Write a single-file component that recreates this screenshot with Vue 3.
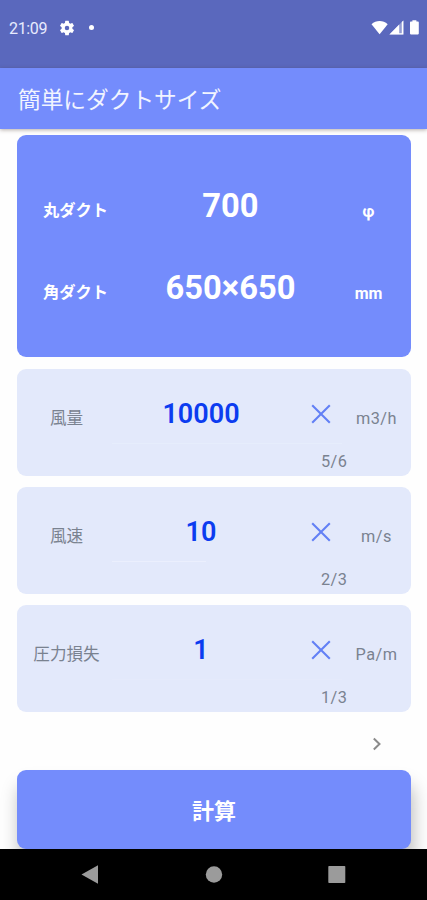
<script setup>
const results = [
  { label: '丸ダクト', value: '700', unit: 'φ' },
  { label: '角ダクト', value: '650×650', unit: 'mm' },
]
const fields = [
  { label: '風量', value: '10000', unit: 'm3/h', count: '5/6', line: 'line-full' },
  { label: '風速', value: '10', unit: 'm/s', count: '2/3', line: 'line-part' },
  { label: '圧力損失', value: '1', unit: 'Pa/m', count: '1/3', line: 'line-faint' },
]
</script>

<template>
  <div class="screen">
    <header class="status">
      <span class="time">21:09</span>
      <svg class="gear" width="18" height="18" viewBox="0 0 24 24">
        <path fill="#fff" fill-rule="evenodd" d="M19.14 12.94c.04-.3.06-.61.06-.94s-.02-.64-.07-.94l2.03-1.58a.49.49 0 0 0 .12-.61l-1.92-3.32a.49.49 0 0 0-.59-.22l-2.39.96a7 7 0 0 0-1.62-.94l-.36-2.54A.48.48 0 0 0 13.92 2.4h-3.84a.48.48 0 0 0-.47.41l-.36 2.54c-.59.24-1.13.57-1.62.94l-2.39-.96a.48.48 0 0 0-.59.22L2.74 8.87a.48.48 0 0 0 .12.61l2.03 1.58a6 6 0 0 0 0 1.88l-2.03 1.58a.49.49 0 0 0-.12.61l1.92 3.32c.12.22.37.29.59.22l2.39-.96c.5.38 1.03.7 1.62.94l.36 2.54c.05.24.24.41.48.41h3.84c.24 0 .44-.17.47-.41l.36-2.54a7 7 0 0 0 1.62-.94l2.39.96c.22.08.47 0 .59-.22l1.92-3.32a.48.48 0 0 0-.12-.61zM12 15a3 3 0 1 1 0-6 3 3 0 0 1 0 6z" />
      </svg>
      <span class="dot"></span>
      <svg class="signals" width="50" height="16" viewBox="0 0 50 16">
        <path fill="#fff" d="M.5 4.200C5-.2 12.200-.2 16.700 4.200L8.600 14.300z" />
        <path fill="#fff" fill-opacity=".35" d="M32.400.4V14.400H18.400z" />
        <path fill="#fff" d="M28.200 4.600V14.400H18.400zM30.800 2l1.600-1.600V14.400h-4.200v-1.200h2.600z" />
        <path fill="#fff" d="M39.800 1.600h1.600V.3h4v1.300h1.600q.8 0 .8.800v11.200q0 .8-.8.800h-7.200q-.8 0-.8-.8V2.400q0-.8.8-.8z" />
      </svg>
    </header>
    <div class="appbar">簡単にダクトサイズ</div>
    <main>
      <section class="result">
        <div v-for="r in results" :key="r.label" class="result-row">
          <span class="r-label">{{ r.label }}</span>
          <span class="r-value">{{ r.value }}</span>
          <span class="r-unit">{{ r.unit }}</span>
        </div>
      </section>
      <section v-for="f in fields" :key="f.label" class="field">
        <span class="f-label">{{ f.label }}</span>
        <span class="f-value">{{ f.value }}</span>
        <svg class="clear" width="20" height="20" viewBox="0 0 20 20">
          <path d="M1.200 1.200l17.600 17.600M18.800 1.200L1.200 18.800" stroke="#6380f5" stroke-width="2.100" fill="none" />
        </svg>
        <span class="f-unit">{{ f.unit }}</span>
        <span class="line" :class="f.line"></span>
        <span class="count">{{ f.count }}</span>
      </section>
      <div class="more">
        <svg width="10" height="14" viewBox="0 0 10 14">
          <path d="M1.800 1.500L7.500 7l-5.700 5.500" stroke="#8b8b8b" stroke-width="2" fill="none" />
        </svg>
      </div>
      <button class="calc">計算</button>
    </main>
    <nav class="nav">
      <svg width="427" height="51" viewBox="0 0 427 51" fill="#9b9b9b">
        <path d="M81.500 25.500L98 16.300v18.400z" />
        <circle cx="214" cy="25.500" r="8.200" />
        <rect x="328.300" y="17" width="17" height="17" rx=".8" />
      </svg>
    </nav>
  </div>
</template>

<style>
body {
  margin: 0;
  overflow: hidden;
}
</style>

<style scoped>
.screen {
  display: flex;
  flex-direction: column;
  width: 427px;
  height: 900px;
  overflow: hidden;
  background: #fefefe;
  font-family: Roboto, "Noto Sans CJK JP", sans-serif;
}
.status {
  display: flex;
  align-items: center;
  flex: none;
  box-sizing: border-box;
  height: 68px;
  padding: 0 6px 13px 9px;
  background: #5a68bd;
  color: #fff;
}
.time {
  width: 39px;
  padding-top: 1px;
  font-size: 16px;
  letter-spacing: -0.35px;
  color: #e8ebff;
}
.gear {
  margin-left: 10px;
}
.dot {
  width: 5px;
  height: 5px;
  margin-left: 13px;
  border-radius: 50%;
  background: #fff;
}
.signals {
  margin-left: auto;
}
.appbar {
  position: relative;
  flex: none;
  box-sizing: border-box;
  height: 61px;
  padding: 2px 0 0 18px;
  line-height: 62px;
  background: #748cfc;
  color: #f1f4ff;
  font-size: 22.7px;
  box-shadow: 0 1px 4px rgba(70, 50, 40, 0.4);
}
main {
  display: flex;
  flex-direction: column;
  flex: none;
  box-sizing: border-box;
  height: 720px;
  padding: 6px 16px 0 17px;
}
.result {
  position: relative;
  flex: none;
  box-sizing: border-box;
  height: 222px;
  margin-bottom: 12px;
  padding-top: 30px;
  border-radius: 9px;
  background: #748cfc;
  color: #fff;
  font-weight: 700;
}
.result-row {
  display: grid;
  grid-template-columns: 117px 193px 83px;
  height: 82px;
  text-align: center;
  line-height: 82px;
}
.r-label {
  padding-top: 5px;
  font-size: 16.3px;
}
.r-value {
  font-size: 32.7px;
}
.r-unit {
  padding-top: 6px;
  font-size: 16px;
}
.field {
  display: grid;
  grid-template-columns: 99px 170px 17px 34px 5px 69px;
  grid-template-rows: 73px 2px 32px;
  flex: none;
  align-items: center;
  justify-items: center;
  height: 107px;
  margin-bottom: 11px;
  border-radius: 9px;
  background: #e3e9fb;
  color: #7a8290;
}
.f-label {
  padding-top: 22px;
  font-size: 16.600px;
}
.f-value {
  padding-top: 17px;
  color: #0c3cf0;
  font-size: 27px;
  font-weight: 600;
}
.clear {
  grid-column: 4;
  margin: 17px 0 0 1px;
}
.f-unit {
  grid-column: 6;
  padding-top: 25px;
  font-size: 16.300px;
  letter-spacing: 0.5px;
}
.line {
  grid-row: 2;
  grid-column: 1 / 6;
  justify-self: start;
  width: 230px;
  height: 1px;
  margin-left: 95px;
  background: #e6edfc;
}
.line-part {
  width: 94px;
  background: #ebeffd;
}
.line-faint {
  background: #e5eafb;
}
.count {
  grid-row: 3;
  grid-column: 4 / 7;
  justify-self: start;
  margin-left: 18px;
  padding-top: 2px;
  font-size: 16.300px;
  letter-spacing: 0.4px;
}
.more {
  display: flex;
  flex: none;
  align-items: center;
  justify-content: flex-end;
  height: 42px;
  margin-bottom: 5px;
  padding-right: 29px;
}
.calc {
  flex: none;
  height: 78.500px;
  padding: 0;
  border: 0;
  border-radius: 9px;
  background: #748cfc;
  color: #fff;
  font: 700 22px Roboto, "Noto Sans CJK JP", sans-serif;
  box-shadow: 2px 15px 18px rgba(0, 0, 0, 0.27);
}
.nav {
  position: relative;
  flex: none;
  height: 51px;
  background: #000;
}
.nav svg {
  display: block;
}
</style>
